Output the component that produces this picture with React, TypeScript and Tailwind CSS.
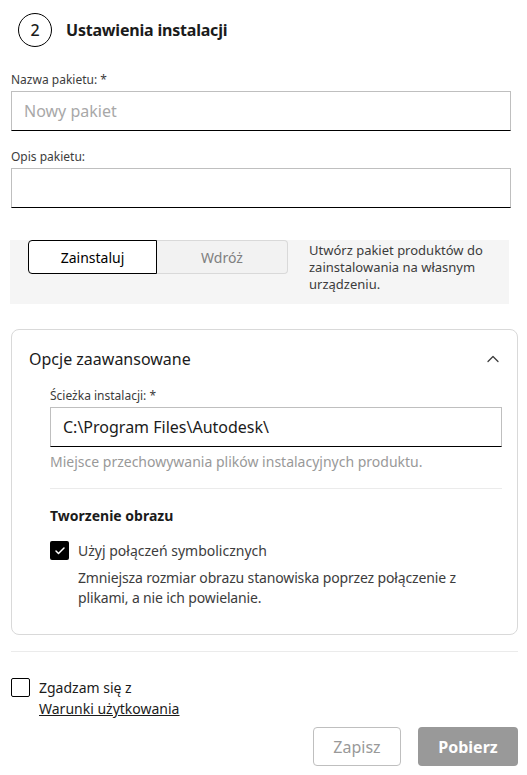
import { ChevronUp, Check } from "lucide-react";

const font = { fontFamily: '"Noto Sans", "Open Sans", sans-serif' };

function Field({ label, value, placeholder }: { label: string; value?: string; placeholder?: string }) {
  return (
    <div className="flex flex-col">
      <label className="text-[12px] leading-[16px] text-[#3c3c3c] mb-[3px]">{label}</label>
      <div className="h-[40px] border border-[#bfbfbf] border-b-black flex items-center px-[12px]">
        {value ? (
          <span className="text-[16px] text-[#1b1b1b]">{value}</span>
        ) : (
          <span className="text-[16px] text-[#a8a8a8]">{placeholder}</span>
        )}
      </div>
    </div>
  );
}

export default function App() {
  return (
    <div style={font} className="w-[527px] h-[775px] bg-white text-[#1b1b1b] relative overflow-hidden">
      <div className="flex items-center gap-[14px] pl-[18px] pt-[13px]">
        <div className="w-[34px] h-[34px] rounded-full border-[1.5px] border-black flex items-center justify-center text-[16px] font-medium">
          2
        </div>
        <h1 className="text-[16px] font-bold tracking-[-0.2px]">Ustawienia instalacji</h1>
      </div>

      <div className="pl-[11px] w-[511px] mt-[25px] flex flex-col gap-[18px]">
        <Field label="Nazwa pakietu: *" placeholder="Nowy pakiet" />
        <Field label="Opis pakietu:" />
      </div>

      <div className="ml-[10px] w-[499px] mt-[32px] bg-[#f5f5f5] h-[64px] flex items-start pl-[18px]">
        <div className="flex h-[34px] w-[260px]">
          <button className="w-[129px] h-full bg-white border border-black rounded-l-[4px] text-[14px] text-black">
            Zainstaluj
          </button>
          <button className="w-[131px] h-full bg-[#f2f2f2] border border-[#d9d9d9] border-l-0 rounded-r-[4px] text-[14px] text-[#808080]">
            Wdróż
          </button>
        </div>
        <p className="ml-[21px] mt-[2px] w-[190px] text-[13px] leading-[17px] text-[#3c3c3c]">
          Utwórz pakiet produktów do zainstalowania na własnym urządzeniu.
        </p>
      </div>

      <div className="ml-[11px] w-[507px] mt-[25px] border border-[#d9d9d9] rounded-[8px] pb-[26px]">
        <div className="flex items-center justify-between pl-[17px] pr-[14px] pt-[17px]">
          <span className="text-[16px]">Opcje zaawansowane</span>
          <ChevronUp size={20} strokeWidth={1.5} className="text-[#3c3c3c]" />
        </div>
        <div className="pl-[38px] pr-[15px] mt-[17px]">
          <Field label="Ścieżka instalacji: *" value={"C:\\Program Files\\Autodesk\\"} />
          <p className="text-[14px] leading-[20px] text-[#999999] mt-[5px]">
            Miejsce przechowywania plików instalacyjnych produktu.
          </p>
          <div className="h-px bg-[#ebebeb] mt-[16px]" />
          <h2 className="text-[14px] font-bold mt-[16px]">Tworzenie obrazu</h2>
          <div className="flex items-center gap-[9px] mt-[14px]">
            <div className="w-[19px] h-[19px] bg-black rounded-[2px] flex items-center justify-center">
              <Check size={12} strokeWidth={3} className="text-white" />
            </div>
            <span className="text-[14px] text-[#3c3c3c]">Użyj połączeń symbolicznych</span>
          </div>
          <p className="ml-[28px] mt-[7px] text-[14px] leading-[20px] text-[#3c3c3c] tracking-[-0.15px]">
            Zmniejsza rozmiar obrazu stanowiska poprzez połączenie z plikami, a nie ich powielanie.
          </p>
        </div>
      </div>

      <div className="ml-[11px] w-[507px] h-px bg-[#ebebeb] mt-[16px]" />

      <div className="ml-[11px] mt-[25px] flex items-start gap-[9px]">
        <div className="w-[19px] h-[19px] border border-black rounded-[2px] mt-[1px]" />
        <div className="text-[14px] leading-[21px] text-[#1b1b1b]">
          <div>Zgadzam się z</div>
          <a className="underline">Warunki użytkowania</a>
        </div>
      </div>

      <div className="flex justify-end gap-[17px] pr-[9px] mt-[8px]">
        <button className="w-[88px] h-[39px] border border-[#bfbfbf] rounded-[4px] text-[16px] text-[#999999] bg-white">
          Zapisz
        </button>
        <button className="w-[100px] h-[39px] rounded-[4px] text-[16px] font-bold text-white bg-[#999999]">
          Pobierz
        </button>
      </div>
    </div>
  );
}
